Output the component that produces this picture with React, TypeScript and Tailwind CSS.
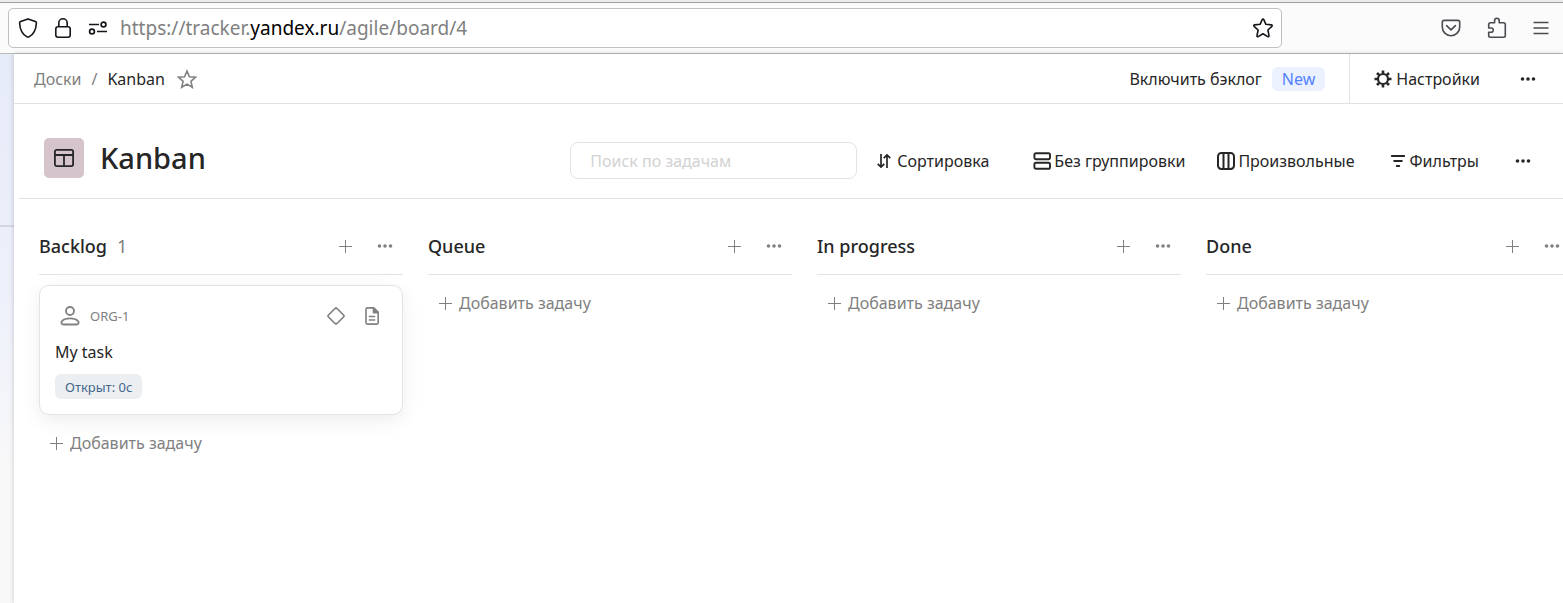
import React from 'react';

type IconProps = { className?: string };

const Dots = ({ className = '' }: IconProps) => (
  <svg viewBox="0 0 16 16" className={`size-4 ${className}`} fill="currentColor" aria-hidden="true">
    <circle cx="2.5" cy="8" r="1.8" />
    <circle cx="8" cy="8" r="1.8" />
    <circle cx="13.5" cy="8" r="1.8" />
  </svg>
);

const Plus = () => (
  <svg viewBox="0 0 15 15" className="size-[15px] shrink-0" stroke="currentColor" strokeWidth="1" aria-hidden="true">
    <path d="M7.5 1v13M1 7.5h13" />
  </svg>
);

const Shield = () => (
  <svg viewBox="0 0 20 20" className="size-5" fill="none" stroke="currentColor" strokeWidth="1.6" strokeLinejoin="round" aria-hidden="true">
    <path d="M10 .9 17.4 3.6c.8.3 1.1.8 1 1.6C18 11.5 15.5 16.5 11 18.9c-.6.3-1.4.3-2 0C4.500 16.500 2 11.500 1.600 5.200c-.1-.8.2-1.300 1-1.600Z" />
  </svg>
);

const Lock = () => (
  <svg viewBox="0 0 20 20" className="size-5" fill="none" stroke="currentColor" strokeWidth="1.6" aria-hidden="true">
    <rect x="2.8" y="8.8" width="14.4" height="10.4" rx="2.2" />
    <path d="M5.800 8.800V5a4.200 4.200 0 0 1 8.400 0v3.800" />
  </svg>
);

const Permissions = () => (
  <svg viewBox="0 0 20 14" className="h-[14px] w-5" fill="none" stroke="currentColor" strokeWidth="1.7" aria-hidden="true">
    <path d="M1 3.500h10M9 10.500h10" />
    <circle cx="15.5" cy="3.5" r="2.4" />
    <circle cx="4" cy="10.5" r="2.4" />
  </svg>
);

const RoundStar = () => (
  <svg viewBox="0 0 20 20" className="size-5" fill="none" stroke="currentColor" strokeWidth="1.6" strokeLinejoin="round" aria-hidden="true">
    <path d="M9.300 1.400a.8.8 0 0 1 1.400 0l2.200 4.900 5.500.6c.8.1 1 .9.5 1.400l-4 3.700 1.100 5.700c.1.700-.6 1.200-1.200.9L10 15.800l-4.800 2.800c-.6.3-1.300-.2-1.200-.9l1.100-5.700-4-3.700c-.5-.5-.3-1.300.5-1.400l5.500-.6Z" />
  </svg>
);

const Pocket = () => (
  <svg viewBox="0 0 20 18" className="h-[18px] w-5" fill="none" stroke="currentColor" strokeWidth="1.6" strokeLinecap="round" strokeLinejoin="round" aria-hidden="true">
    <path d="M3.200 1.400h13.600c1.100 0 1.900.8 1.900 1.900V8a8.700 8.700 0 0 1-17.400 0V3.300c0-1.100.8-1.900 1.900-1.900Z" />
    <path d="m5.600 6.600 4.400 4.200 4.400-4.200" />
  </svg>
);

const Puzzle = () => (
  <svg viewBox="0 0 20 22" className="h-[22px] w-5" fill="none" stroke="currentColor" strokeWidth="1.6" strokeLinejoin="round" aria-hidden="true">
    <path d="M7.600 5.700V3.600a2.300 2.300 0 0 1 4.600 0v2.100h4.400c1 0 1.700.7 1.700 1.700v11.200c0 1-.7 1.700-1.700 1.700H3.400c-1 0-1.700-.7-1.700-1.700V15.200h2.500a2.100 2.100 0 0 0 0-4.200H1.700V7.400c0-1 .7-1.700 1.700-1.700Z" />
  </svg>
);

const Menu = () => (
  <svg viewBox="0 0 16 14" className="h-[14px] w-4" stroke="currentColor" strokeWidth="1.5" aria-hidden="true">
    <path d="M.5 1.500h15M.5 7h15M.5 12.500h15" />
  </svg>
);

const Star = () => (
  <svg viewBox="0 0 20 20" className="size-5" fill="none" stroke="currentColor" strokeWidth="1.6" strokeLinejoin="miter" aria-hidden="true">
    <path d="m10 2 2.400 5.700 6.200.5-4.700 4.100 1.400 6-5.300-3.200-5.300 3.200 1.400-6-4.700-4.100 6.200-.5Z" />
  </svg>
);

const Gear = () => (
  <svg viewBox="0 0 18 18" className="size-[18px]" fill="none" stroke="currentColor" aria-hidden="true">
    <circle cx="9" cy="9" r="5" strokeWidth="2.2" />
    <path strokeWidth="2.6" d="M9 .5v3.200M9 14.300v3.200M.5 9h3.200M14.300 9h3.200M3 3l2.200 2.200M12.800 12.800 15 15M15 3l-2.200 2.200M5.200 12.800 3 15" />
  </svg>
);

const BoardIcon = () => (
  <svg viewBox="0 0 20 18" className="h-[18px] w-5" fill="none" stroke="currentColor" strokeWidth="1.8" aria-hidden="true">
    <rect x=".9" y=".9" width="18.2" height="16.2" rx="1.8" />
    <path d="M1 6h18M10 6v11" />
  </svg>
);

const Sort = () => (
  <svg viewBox="0 0 14 16" className="h-4 w-[14px]" fill="none" stroke="currentColor" strokeWidth="1.7" aria-hidden="true">
    <path d="M4 1v13M.7 10.800 4 14.100l3.300-3.300M10 15V2M6.700 5.200 10 1.900l3.300 3.300" />
  </svg>
);

const Rows = () => (
  <svg viewBox="0 0 18 18" className="size-[18px]" fill="none" stroke="currentColor" strokeWidth="1.9" aria-hidden="true">
    <rect x="1.4" y="1.2" width="15.6" height="6" rx="1.6" />
    <rect x="1.4" y="10.8" width="15.6" height="6" rx="1.6" />
  </svg>
);

const Columns = () => (
  <svg viewBox="0 0 18 18" className="size-[18px]" fill="none" stroke="currentColor" strokeWidth="2" aria-hidden="true">
    <rect x="1" y="1" width="16" height="16" rx="3.4" />
    <path d="M6.500 1v16M11.500 1v16" />
  </svg>
);

const Filter = () => (
  <svg viewBox="0 0 16 16" className="size-4" stroke="currentColor" strokeWidth="2" strokeLinecap="round" aria-hidden="true">
    <path d="M1.800 3h12.400M4.200 8h7.600M6.800 13h2.400" />
  </svg>
);

const Person = () => (
  <svg viewBox="0 0 20 20" className="size-5" fill="none" stroke="currentColor" strokeWidth="1.8" aria-hidden="true">
    <circle cx="10" cy="5" r="4" />
    <path d="M10 12.300c3.500 0 6.200.9 7.800 2.600 1.600 1.600.8 3.600-1 3.600H3.200c-1.800 0-2.600-2-1-3.600 1.600-1.700 4.300-2.600 7.800-2.600Z" />
  </svg>
);

const Diamond = () => (
  <svg viewBox="0 0 18 18" className="size-[18px]" fill="none" stroke="currentColor" strokeWidth="1.7" aria-hidden="true">
    <rect x="3" y="3" width="12" height="12" rx="1.4" transform="rotate(45 9 9)" />
  </svg>
);

const Doc = () => (
  <svg viewBox="0 0 14 18" className="h-[18px] w-[14px]" fill="none" stroke="currentColor" strokeWidth="1.6" strokeLinejoin="round" aria-hidden="true">
    <path d="M2.300.9h6.400L13.200 5.400v10.400c0 .8-.5 1.300-1.300 1.300H2.300c-.8 0-1.300-.5-1.300-1.300V2.200C1 1.400 1.500.9 2.300.9Z" />
    <path d="M8.500 1v4.600h4.600Z" fill="currentColor" />
    <path d="M3.800 9.500h6.400M3.800 13h6.400" strokeWidth="1.3" />
  </svg>
);

const AddTask = () => (
  <button type="button" className="flex h-6 items-center gap-[6px] px-[10px] text-[#808080]">
    <Plus />
    Добавить задачу
  </button>
);

function Column({ title, count, children }: { title: string; count?: number; children?: React.ReactNode }) {
  return (
    <section className="w-[364px] shrink-0">
      <header className="flex h-[57px] items-center justify-between border-b border-[#e3e3e3] pr-[10px] text-[#808080]">
        <h2 className="text-[18px] font-medium text-[#262626]">
          {title}
          {count !== undefined && <span className="ml-[10px] font-normal text-[#808080]">{count}</span>}
        </h2>
        <div className="flex items-center gap-6">
          <button type="button" aria-label="Добавить задачу">
            <Plus />
          </button>
          <button type="button" aria-label="Действия с колонкой">
            <Dots />
          </button>
        </div>
      </header>
      {children}
      <div className="pt-4">
        <AddTask />
      </div>
    </section>
  );
}

function BrowserBar() {
  return (
    <div className="border-t-2 border-[#ececec]">
      <div className="flex h-[52px] items-center border-y border-b-[#bdbdbd] border-t-[#9e9e9e] bg-[#fbfbfb] pl-2 pr-[14px]">
        <div className="flex h-10 w-[1274px] items-center rounded-[5px] border border-[#bfbfc4] bg-white pl-[9px] pr-2 text-[#15141a]">
          <Shield />
          <span className="ml-[15px]"><Lock /></span>
          <span className="ml-[15px]"><Permissions /></span>
          <a href="#address" className="ml-3 grow text-[19px] text-[#808080]">
            https://tracker.<span className="text-black">yandex.ru</span>/agile/board/4
          </a>
          <button type="button" aria-label="Закладка"><RoundStar /></button>
        </div>
        <div className="ml-auto flex items-center gap-[26px] text-[#4b4b52]">
          <button type="button" aria-label="Pocket"><Pocket /></button>
          <button type="button" aria-label="Расширения"><Puzzle /></button>
          <button type="button" aria-label="Меню"><Menu /></button>
        </div>
      </div>
    </div>
  );
}

export default function App() {
  return (
    <div className="flex min-h-screen flex-col overflow-hidden bg-white font-['Noto_Sans',sans-serif] text-[16px] leading-6 text-[#262626]">
      <BrowserBar />
      <div className="flex grow">
        <aside className="w-[14px] shrink-0 bg-linear-to-b from-[#e6ebf8] via-[#eef1fb] via-45% to-[#f8f8f9] to-75%">
          <div className="h-[173px] border-b-2 border-[#d3d6e2]" />
        </aside>
        <main className="min-w-0 grow overflow-hidden bg-white shadow-[0_0_5px_rgba(0,0,0,0.2)]">
          <div className="flex h-[50px] items-center border-b border-[#e3e3e3] pl-5">
            <nav className="flex items-center">
              <a href="#boards" className="text-[#808080]">Доски</a>
              <span className="mx-[10px] text-[#808080]">/</span>
              <span>Kanban</span>
              <button type="button" aria-label="В избранное" className="ml-3 text-[#808080]"><Star /></button>
            </nav>
            <div className="ml-auto flex h-full items-center">
              <button type="button" className="flex items-center gap-[10px] pr-6">
                Включить бэклог
                <span className="rounded-[6px] bg-[#ebf1ff] px-[10px] text-[#5282ff]">New</span>
              </button>
              <div className="flex h-full items-center border-l border-[#e3e3e3] pl-6 pr-[27px]">
                <button type="button" className="flex items-center gap-1"><Gear />Настройки</button>
                <button type="button" aria-label="Ещё" className="ml-10"><Dots /></button>
              </div>
            </div>
          </div>

          <div className="ml-[5px] flex h-[95px] items-start border-b border-[#e3e3e3] pl-[25px] pr-8 pt-[34px]">
            <div className="flex size-10 items-center justify-center rounded-[5px] bg-[#d5c4cc]"><BoardIcon /></div>
            <h1 className="ml-4 text-[29px] leading-10 font-medium">Kanban</h1>
            <div className="ml-auto flex items-center pt-1">
              <input
                type="text"
                aria-label="Поиск по задачам"
                placeholder="Поиск по задачам"
                className="h-[37px] w-[287px] rounded-[8px] border border-[#e3e3e3] px-[19px] placeholder:text-[#d2d2d2]"
              />
              <button type="button" className="ml-5 flex items-center gap-[6px]"><Sort />Сортировка</button>
              <button type="button" className="ml-11 flex items-center gap-[3px]"><Rows />Без группировки</button>
              <button type="button" className="ml-8 flex items-center gap-[3px]"><Columns />Произвольные</button>
              <button type="button" className="ml-[35px] flex items-center gap-1"><Filter />Фильтры</button>
              <button type="button" aria-label="Ещё" className="ml-9"><Dots /></button>
            </div>
          </div>

          <div className="flex gap-[25px] pl-[25px] pt-[19px]">
            <Column title="Backlog" count={1}>
              <article className="mt-[10px] h-[130px] rounded-[10px] border border-[#e3e3e3] bg-white px-[15px] shadow-[0_6px_20px_rgba(0,0,0,0.07)]">
                <div className="flex h-[60px] items-center pl-[5px] pr-2 text-[#808080]">
                  <Person />
                  <a href="#ORG-1" className="ml-[10px] text-[13px]">ORG-1</a>
                  <span className="ml-auto"><Diamond /></span>
                  <span className="ml-5"><Doc /></span>
                </div>
                <h3 className="-mt-1 h-[22px] leading-5">My task</h3>
                <span className="mt-[10px] inline-flex h-[25px] items-center rounded-[6px] bg-[#ebeff2] px-[10px] text-[13px] text-[#44668c]">
                  Открыт: 0с
                </span>
              </article>
            </Column>
            <Column title="Queue" />
            <Column title="In progress" />
            <Column title="Done" />
          </div>
        </main>
      </div>
    </div>
  );
}
